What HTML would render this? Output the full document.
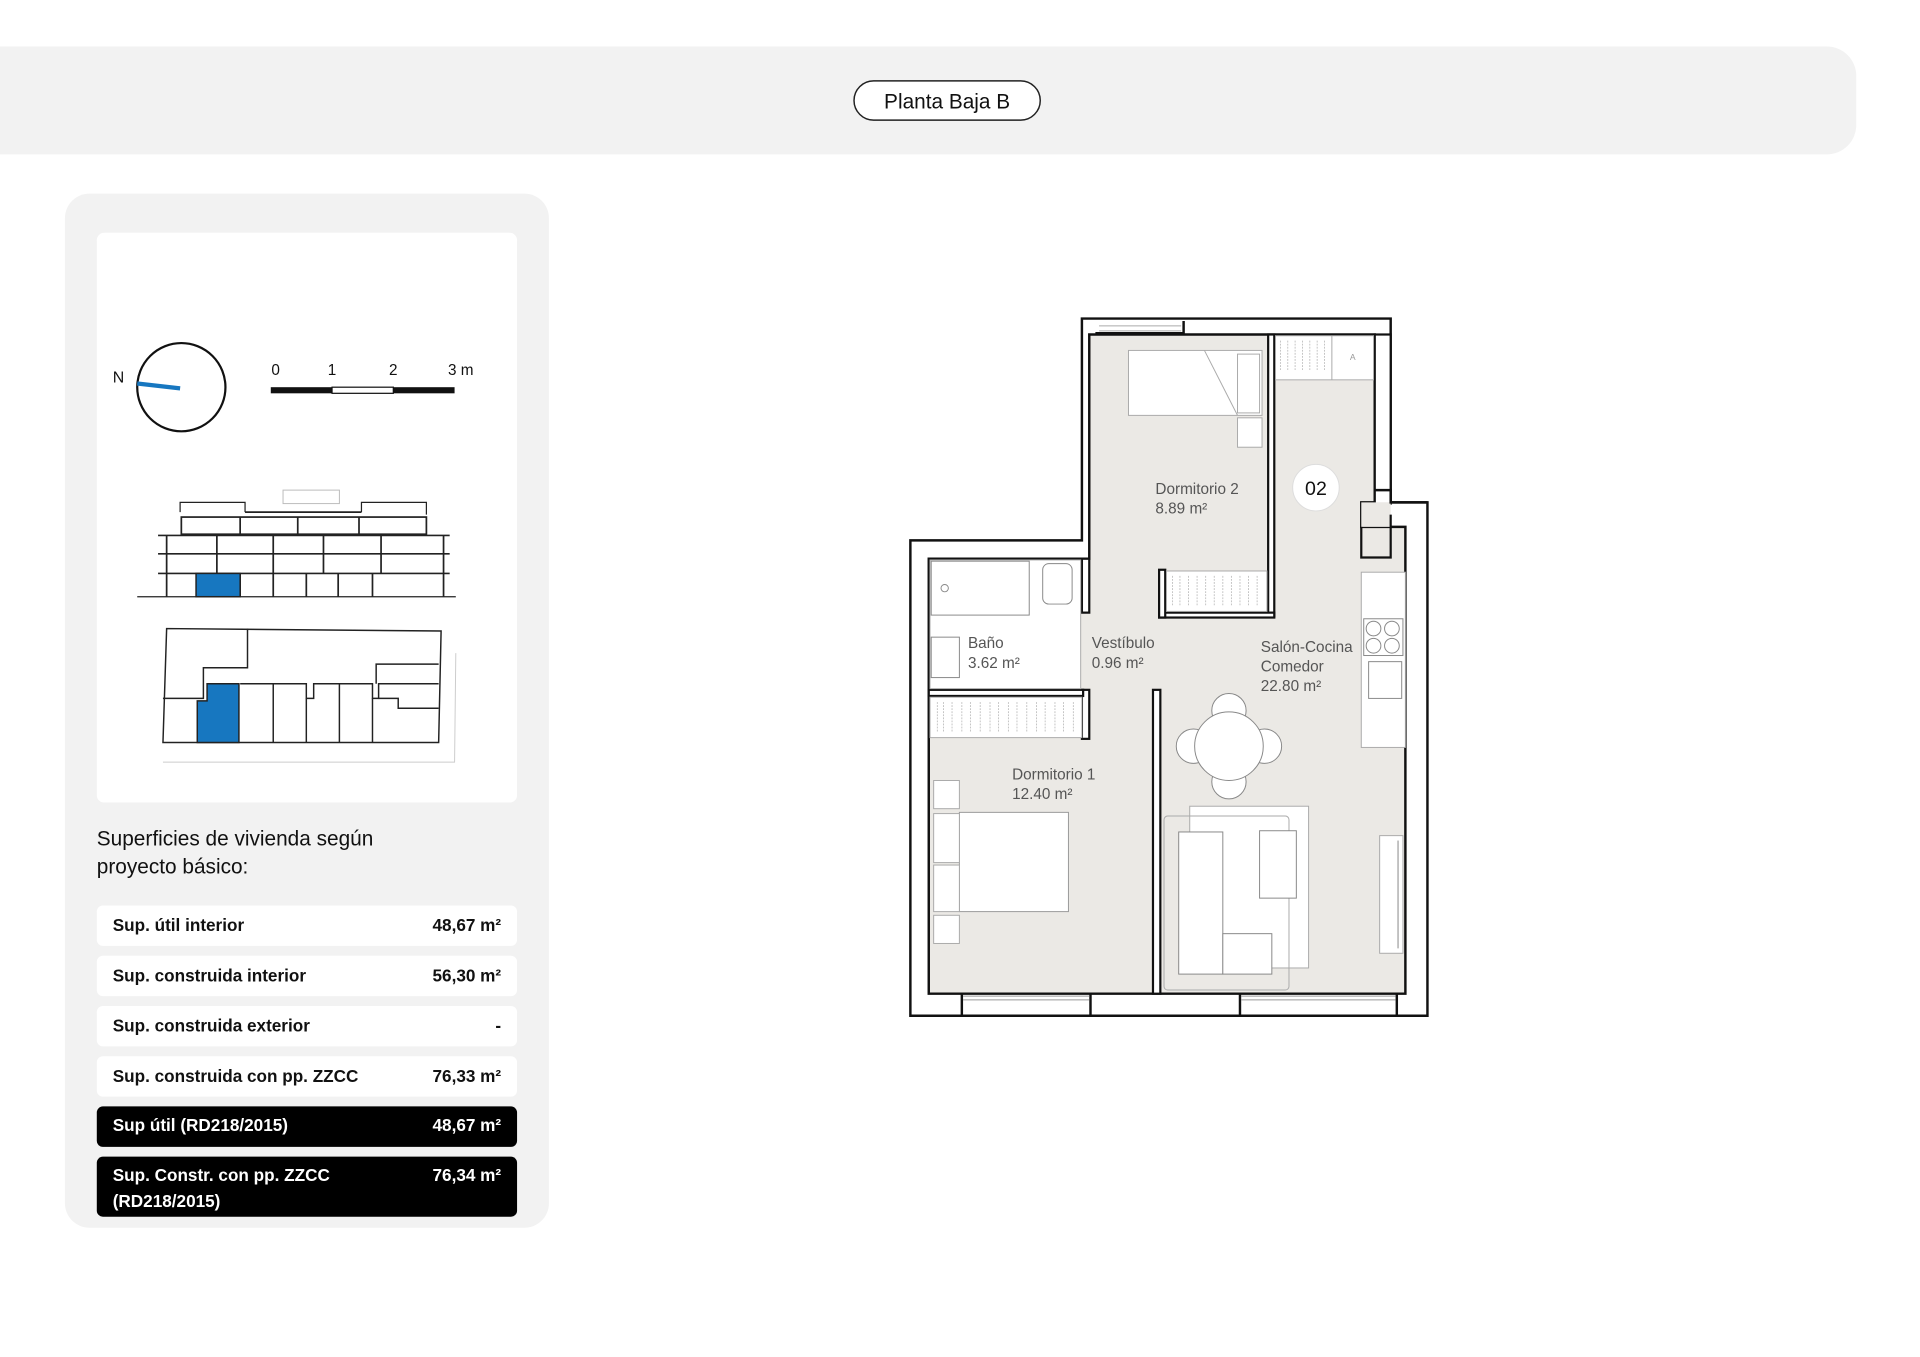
<!DOCTYPE html>
<html><head><meta charset="utf-8"><style>
html,body{margin:0;padding:0;background:#fff;width:1920px;height:1357px;overflow:hidden}
svg{display:block}
text{font-family:"Liberation Sans",sans-serif}
</style></head><body>
<svg width="1920" height="1357" viewBox="0 0 1567 1107.5" preserveAspectRatio="none" xmlns="http://www.w3.org/2000/svg">
<!-- top bar -->
<rect x="-30" y="38" width="1545" height="88" rx="24" fill="#f2f2f2"/>
<rect x="697" y="66" width="152" height="32" rx="16" fill="#fff" stroke="#222" stroke-width="1.2"/>
<text x="773" y="88.5" font-size="17" text-anchor="middle" fill="#111">Planta Baja B</text>

<!-- left panel -->
<rect x="53" y="158" width="395" height="844" rx="20" fill="#f2f2f2"/>
<rect x="79" y="190" width="343" height="465" rx="6" fill="#fff"/>
<circle cx="148" cy="316" r="36" fill="none" stroke="#111" stroke-width="1.8"/>
<line x1="112" y1="313" x2="147" y2="317" stroke="#1777c0" stroke-width="3.5"/>
<text x="92" y="312" font-size="13" fill="#111">N</text>
<rect x="221" y="316" width="50" height="5" fill="#111"/>
<rect x="271" y="316" width="50" height="5" fill="#fff" stroke="#111" stroke-width="1"/>
<rect x="321" y="316" width="50" height="5" fill="#111"/>
<g font-size="12.5" fill="#111" text-anchor="middle">
<text x="225" y="306">0</text><text x="271" y="306">1</text><text x="321" y="306">2</text><text x="376" y="306">3 m</text></g>

<!-- elevation -->
<g fill="none" stroke="#222" stroke-width="1.4">
<rect x="231" y="400" width="46" height="11" stroke="#bbb" stroke-width="0.8"/>
<polyline points="147,418 147,410 200,410 200,418" stroke-width="1"/>
<polyline points="295,418 295,410 348,410 348,420" stroke-width="1"/>
<line x1="200" y1="418" x2="295" y2="418"/>
<rect x="148" y="422" width="200" height="14"/>
<line x1="196" y1="422" x2="196" y2="436"/><line x1="243" y1="422" x2="243" y2="436"/><line x1="293" y1="422" x2="293" y2="436"/>
<line x1="129" y1="437" x2="367" y2="437"/><line x1="129" y1="452" x2="367" y2="452"/><line x1="129" y1="468" x2="367" y2="468"/>
<line x1="136" y1="437" x2="136" y2="487"/><line x1="362" y1="437" x2="362" y2="487"/>
<line x1="177" y1="437" x2="177" y2="468"/><line x1="223" y1="437" x2="223" y2="468"/><line x1="264" y1="437" x2="264" y2="468"/><line x1="311" y1="437" x2="311" y2="468"/>
<line x1="196" y1="468" x2="196" y2="487"/><line x1="223" y1="468" x2="223" y2="487"/><line x1="250" y1="468" x2="250" y2="487"/><line x1="276" y1="468" x2="276" y2="487"/><line x1="304" y1="468" x2="304" y2="487"/>
<line x1="112" y1="487" x2="372" y2="487" stroke-width="1"/>
</g>
<rect x="160" y="468" width="36" height="19" fill="#1777c0" stroke="#222" stroke-width="1.2"/>

<!-- site plan -->
<polyline points="372,533 371,622 133,622" fill="none" stroke="#ccc" stroke-width="0.8"/>
<g fill="none" stroke="#222" stroke-width="1.2">
<polygon points="136,513 360,515 358,606 133,606"/>
<polyline points="202,513 202,545 166,545 166,570 133,570"/>
<polyline points="196,558 223,558 223,606"/>
<polyline points="223,558 250,558 250,570 256,570 256,558 277,558 277,606"/>
<line x1="250" y1="570" x2="250" y2="606"/>
<polyline points="277,558 304,558 304,570 309,570 309,558 358,558"/>
<polyline points="307,558 307,542 358,542"/>
<polyline points="309,570 325,570 325,578 358,578"/>
<line x1="304" y1="570" x2="304" y2="606"/>
</g>
<polygon points="161,606 161,572 169,572 169,558 195,558 195,606" fill="#1777c0" stroke="#222" stroke-width="1.2"/>

<!-- surfaces -->
<text x="79" y="690" font-size="17" fill="#111">Superficies de vivienda según</text>
<text x="79" y="713" font-size="17" fill="#111">proyecto básico:</text>
<g font-size="14" font-weight="bold">
<rect x="79" y="739" width="343" height="33" rx="5" fill="#fff"/>
<text x="92" y="760" fill="#111">Sup. útil interior</text><text x="409" y="760" fill="#111" text-anchor="end">48,67  m²</text>
<rect x="79" y="780" width="343" height="33" rx="5" fill="#fff"/>
<text x="92" y="801" fill="#111">Sup. construida interior</text><text x="409" y="801" fill="#111" text-anchor="end">56,30  m²</text>
<rect x="79" y="821" width="343" height="33" rx="5" fill="#fff"/>
<text x="92" y="842" fill="#111">Sup. construida exterior</text><text x="409" y="842" fill="#111" text-anchor="end">-</text>
<rect x="79" y="862" width="343" height="33" rx="5" fill="#fff"/>
<text x="92" y="883" fill="#111">Sup. construida con pp. ZZCC</text><text x="409" y="883" fill="#111" text-anchor="end">76,33  m²</text>
<rect x="79" y="903" width="343" height="33" rx="5" fill="#000"/>
<text x="92" y="923" fill="#fff">Sup útil (RD218/2015)</text><text x="409" y="923" fill="#fff" text-anchor="end">48,67  m²</text>
<rect x="79" y="944" width="343" height="49" rx="5" fill="#000"/>
<text x="92" y="964" fill="#fff">Sup. Constr. con pp. ZZCC</text><text x="409" y="964" fill="#fff" text-anchor="end">76,34  m²</text>
<text x="92" y="985" fill="#fff">(RD218/2015)</text>
</g>

<!-- floor plan -->
<polygon points="743,441 883,441 883,260 1135,260 1135,410 1165,410 1165,829 743,829" fill="#fff" stroke="#111" stroke-width="2"/>
<polygon points="758,456 889,456 889,273 1122,273 1122,410 1111,410 1111,430 1147,430 1147,811 758,811" fill="#ebe9e5" stroke="#111" stroke-width="2"/>
<polyline points="895,273 895,272 966,272 966,262" fill="none" stroke="#111" stroke-width="2"/>
<line x1="897" y1="266" x2="964" y2="266" stroke="#aaa" stroke-width="0.8"/>
<line x1="897" y1="270" x2="964" y2="270" stroke="#aaa" stroke-width="0.8"/>
<g fill="#fff" stroke="#111" stroke-width="1.8">
<rect x="1035" y="273" width="5" height="230"/>
<rect x="946" y="500" width="94" height="4"/>
<rect x="946" y="465" width="5" height="39"/>
<rect x="883" y="456" width="6" height="44"/>
<rect x="883" y="563" width="6" height="40"/>
<rect x="941" y="563" width="6" height="248"/>
<rect x="758" y="563" width="126" height="5"/>
<rect x="1122" y="273" width="13" height="138"/>
<rect x="1111" y="410" width="24" height="20" fill="#ebe9e5" stroke="none"/>
</g>
<polyline points="1122,400 1135,400 1135,410 1165,410" fill="none" stroke="#111" stroke-width="2"/>
<polyline points="1111,430 1111,455 1135,455 1135,420" fill="none" stroke="#111" stroke-width="1.8"/>
<g stroke="#111" stroke-width="2" fill="none">
<line x1="785" y1="811" x2="785" y2="829"/><line x1="890" y1="811" x2="890" y2="829"/>
<line x1="1012" y1="811" x2="1012" y2="829"/><line x1="1140" y1="811" x2="1140" y2="829"/>
</g>
<g stroke="#999" stroke-width="0.8">
<line x1="786" y1="813" x2="889" y2="813"/><line x1="786" y1="816" x2="889" y2="816"/>
<line x1="1013" y1="813" x2="1139" y2="813"/><line x1="1013" y1="816" x2="1139" y2="816"/>
</g>
<g fill="#fff" stroke="#aaa" stroke-width="0.8">
<rect x="759" y="457" width="123" height="105"/>
<rect x="759" y="569" width="124" height="33"/>
<rect x="952" y="466" width="82" height="33"/>
<rect x="1041" y="274" width="80" height="36"/>
<rect x="921" y="286" width="109" height="53"/>
<rect x="1010" y="289" width="18" height="48"/>
<rect x="1010" y="341" width="20" height="24"/>
<rect x="760" y="458" width="80" height="44" stroke="#888"/>
<rect x="851" y="460" width="24" height="33" rx="5" stroke="#888"/>
<rect x="760" y="520" width="23" height="33" stroke="#888"/>
<rect x="1111" y="467" width="36" height="143"/>
<rect x="1113" y="505" width="32" height="30" stroke="#888"/>
<rect x="1117" y="540" width="27" height="30" stroke="#888"/>
<rect x="971" y="658" width="97" height="132"/>
<rect x="950" y="666" width="102" height="142" rx="3" fill="none"/>
<rect x="962" y="679" width="36" height="116" stroke="#888"/>
<rect x="998" y="762" width="40" height="33" stroke="#888"/>
<rect x="1028" y="678" width="30" height="55" stroke="#888"/>
<rect x="783" y="663" width="89" height="81" stroke="#999"/>
<rect x="762" y="637" width="21" height="23"/>
<rect x="762" y="664" width="21" height="40"/>
<rect x="762" y="706" width="21" height="38"/>
<rect x="762" y="747" width="21" height="23"/>
<rect x="1126" y="682" width="19" height="96"/>
</g>
<line x1="1087" y1="274" x2="1087" y2="310" stroke="#aaa" stroke-width="0.8"/>
<text x="1104" y="294" font-size="7" fill="#999" text-anchor="middle">A</text>
<line x1="983" y1="286" x2="1010" y2="339" stroke="#aaa" stroke-width="0.8"/>
<circle cx="771" cy="480" r="3" fill="none" stroke="#888" stroke-width="0.8"/>
<g fill="none" stroke="#888" stroke-width="0.8">
<circle cx="1121" cy="513" r="6"/><circle cx="1136" cy="513" r="6"/><circle cx="1121" cy="527" r="6"/><circle cx="1136" cy="527" r="6"/>
<line x1="1141" y1="686" x2="1141" y2="774"/>
</g>
<g stroke="#bbb" stroke-width="0.7" stroke-dasharray="1.5,1">
<path d="M765 573v25M770 573v25M777 573v25M785 573v25M792 573v25M800 573v25M808 573v25M815 573v25M823 573v25M830 573v25M838 573v25M846 573v25M853 573v25M861 573v25M868 573v25M876 573v25"/>
<path d="M957 470v25M963 470v25M970 470v25M977 470v25M984 470v25M991 470v25M998 470v25M1005 470v25M1012 470v25M1019 470v25M1026 470v25"/>
<path d="M1045 278v25M1051 278v25M1057 278v25M1063 278v25M1069 278v25M1075 278v25M1081 278v25"/>
</g>
<g fill="#fff" stroke="#888" stroke-width="0.8">
<circle cx="1003" cy="580" r="14"/><circle cx="1003" cy="638" r="14"/>
<circle cx="974" cy="609" r="14"/><circle cx="1032" cy="609" r="14"/>
<circle cx="1003" cy="609" r="28"/>
</g>
<circle cx="1074" cy="398" r="19" fill="#fff" stroke="#ddd" stroke-width="0.8"/>
<text x="1074" y="404" font-size="16" text-anchor="middle" fill="#111">02</text>
<g font-size="12.5" fill="#555">
<text x="943" y="403">Dormitorio 2</text><text x="943" y="419">8.89 m²</text>
<text x="790" y="529">Baño</text><text x="790" y="545">3.62 m²</text>
<text x="891" y="529">Vestíbulo</text><text x="891" y="545">0.96 m²</text>
<text x="1029" y="532">Salón-Cocina</text><text x="1029" y="548">Comedor</text><text x="1029" y="564">22.80 m²</text>
<text x="826" y="636">Dormitorio 1</text><text x="826" y="652">12.40 m²</text>
</g>
</svg>
</body></html>
